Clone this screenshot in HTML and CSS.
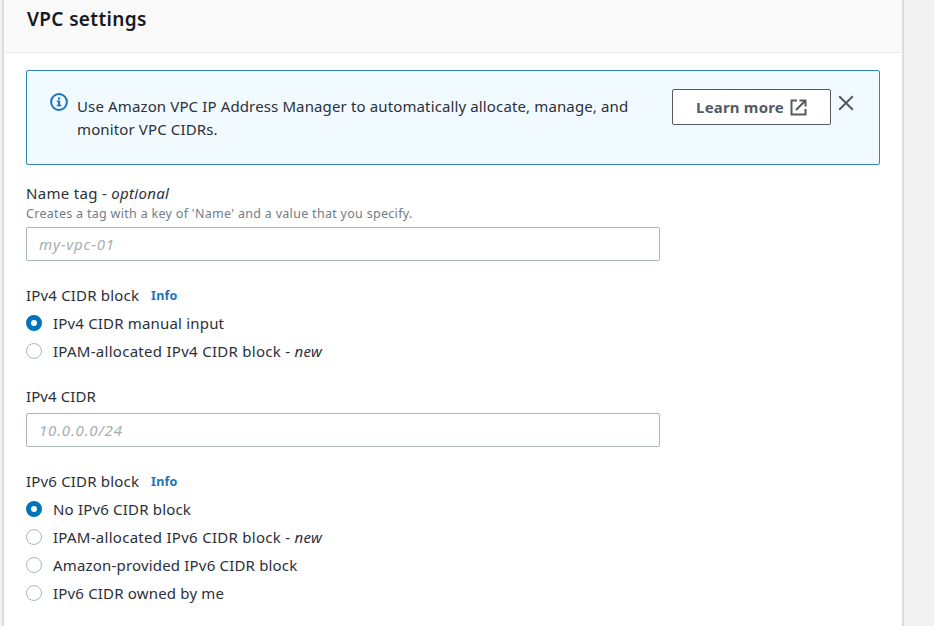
FILE: index.html
```html
<!DOCTYPE html>
<html lang="en">
<head>
<meta charset="utf-8">
<title>VPC settings</title>
<link rel="stylesheet" href="styles.css">
</head>
<body>
<div class="page">
  <main class="card">
    <header class="card-header"><h2>VPC settings</h2></header>
    <div class="card-body">
      <section class="alert">
        <svg class="info-icon" viewBox="0 0 18 18"><circle cx="9" cy="9" r="7.9" fill="none" stroke="#1a75ba" stroke-width="2"/><path d="M8 4.4h2.2v2H8zM6.8 7.4h3.3v4.4h1.3v1.5H6.7v-1.5H8V8.9H6.8z" fill="#1a75ba"/></svg>
        <p class="alert-text"><span class="l1">Use Amazon VPC IP Address Manager to automatically allocate, manage, and</span><br><span class="l2">monitor VPC CIDRs.</span></p>
        <a class="button"><span>Learn more</span><svg viewBox="0 0 17 17" fill="none" stroke="#545b64" stroke-width="2"><path d="M7 1.5H1.5v14h14V10M9.5 1.5h6v6M15 2L6 11"/></svg></a>
        <svg class="close" viewBox="0 0 16 16" fill="none" stroke="#545b64" stroke-width="2"><path d="M1.2 1.2l13.6 13.6M14.8 1.2L1.2 14.8"/></svg>
      </section>

      <section class="field name-field">
        <label class="label" for="name"><span class="t-name">Name tag - <em>optional</em></span></label>
        <p class="hint"><span>Creates a tag with a key of 'Name' and a value that you specify.</span></p>
        <div class="input"><span class="t-ph">my-vpc-01</span></div>
      </section>

      <section class="field v4-group">
        <div class="label"><span>IPv4 CIDR block</span><a class="info">Info</a></div>
        <div class="option"><i class="radio on"></i><span>IPv4 CIDR manual input</span></div>
        <div class="option"><i class="radio"></i><span class="t-ipam">IPAM-allocated IPv4 CIDR block - <em>new</em></span></div>
      </section>

      <section class="field v4-field">
        <div class="label"><span class="t-cidr">IPv4 CIDR</span></div>
        <div class="input"><span class="t-ph">10.0.0.0/24</span></div>
      </section>

      <section class="field v6-group">
        <div class="label"><span>IPv6 CIDR block</span><a class="info">Info</a></div>
        <div class="option"><i class="radio on"></i><span>No IPv6 CIDR block</span></div>
        <div class="option"><i class="radio"></i><span class="t-ipam">IPAM-allocated IPv6 CIDR block - <em>new</em></span></div>
        <div class="option"><i class="radio"></i><span>Amazon-provided IPv6 CIDR block</span></div>
        <div class="option"><i class="radio"></i><span>IPv6 CIDR owned by me</span></div>
      </section>
    </div>
  </main>
</div>
</body>
</html>
```
FILE: styles.css
```css
* { box-sizing: border-box; }
body { margin: 0; background: #fff; color: #2b3039; font: 15px/22px "Noto Sans", sans-serif; overflow: hidden; }
h2, p { margin: 0; }
span, a { white-space: nowrap; letter-spacing: 0.18px; }
.page { width: 934px; height: 626px; padding-left: 2px; background: #f2f2f2; overflow: hidden; }
.card { width: 902px; height: 626px; background: #fff; border: solid #dcdcdc; border-width: 0 2px; }
.card-header { height: 53px; padding: 6px 0 0 23px; background: #fafafa; border-bottom: 1px solid #ebebeb; }
h2 { font-size: 19px; line-height: 27px; font-weight: 600; color: #16191f; letter-spacing: 0.35px; }
.card-body { padding: 17px 22px 0; }
.alert { display: flex; align-items: flex-start; width: 854px; height: 95px; background: #f1faff; border: 1px solid #3184c2; border-radius: 2px; }
.info-icon { width: 18px; height: 18px; margin: 22px 0 0 23px; flex: none; }
.alert-text { width: 594.5px; margin: 24px 0 0 9px; line-height: 23px; }
.l1, .l2 { letter-spacing: 0.13px; }
.button { display: flex; align-items: center; justify-content: center; gap: 6px; flex: none; width: 159px; height: 36px; margin-top: 18px; padding-left: 1px; background: #fff; border: 1px solid #545b64; border-radius: 2px; color: #545b64; font-weight: 700; }
.button svg { width: 17px; height: 17px; }
.close { width: 16px; height: 16px; margin: 24px 0 0 7px; flex: none; }
.label { display: flex; align-items: center; height: 22px; }
.t-name { letter-spacing: 0.31px; }
.t-cidr { letter-spacing: 0.1px; }
.t-ipam { letter-spacing: 0.28px; }
.t-ph { letter-spacing: 0.82px; }
.hint { height: 18px; line-height: 18px; font-size: 12.5px; color: #737d85; }
.hint span { letter-spacing: 0.3px; }
.input { display: flex; align-items: center; width: 634px; height: 34px; padding-left: 12px; border: 1px solid #aab7b8; border-radius: 2px; color: #a5afb0; font-style: italic; }
.info { margin: 2px 0 0 12px; font-size: 12.5px; font-weight: 700; color: #1a75ba; }
.option { display: flex; align-items: center; height: 28.2px; }
.radio { width: 16px; height: 16px; margin-right: 11px; border: 1px solid #aab7b8; border-radius: 50%; background: #fff; }
.radio.on { border: 5px solid #0073bb; }
.name-field { margin-top: 17px; }
.name-field .label { height: 23px; padding-bottom: 1px; }
.name-field .input { margin-top: 4px; }
.v4-group { margin-top: 22px; }
.v4-group .label, .v6-group .label { height: 26px; padding-bottom: 2px; }
.v4-field { margin-top: 20px; }
.v4-field .input { margin-top: 6px; }
.v6-group { margin-top: 22px; }
.v6-group .option { height: 28px; }
```
